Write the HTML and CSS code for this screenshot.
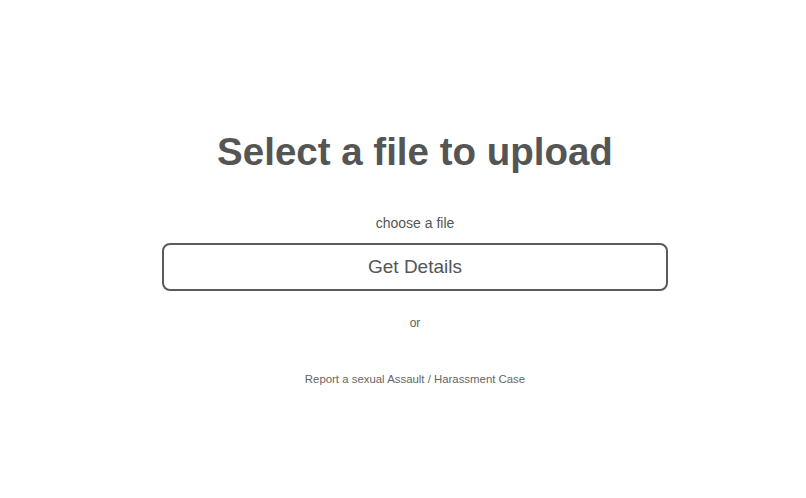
FILE: index.html
```html
<!DOCTYPE html>
<html lang="en">
<head>
<meta charset="utf-8">
<title>Select a file to upload</title>
<link rel="stylesheet" href="styles.css">
</head>
<body>
<main class="page">
  <section class="upload">
    <h1 class="title">Select a file to upload</h1>
    <label class="choose">choose a file</label>
    <button class="details-btn" type="button">Get Details</button>
    <p class="or">or</p>
    <a class="report" href="#">Report a sexual Assault / Harassment Case</a>
  </section>
</main>
</body>
</html>
```

FILE: styles.css
```css
html, body {
  margin: 0;
  padding: 0;
  background: #ffffff;
}
body {
  font-family: Arial, "Liberation Sans", sans-serif;
  color: #555555;
}
.page {
  padding-left: 24px;
  width: 806px;
  box-sizing: border-box;
}
.upload {
  display: flex;
  flex-direction: column;
  align-items: center;
  padding-top: 129px;
}
.title {
  margin: 0;
  font-size: 38.5px;
  font-weight: bold;
  line-height: 46px;
  color: #555555;
}
.choose {
  margin-top: 39px;
  font-size: 14px;
  line-height: 18px;
  color: #555555;
}
.details-btn {
  margin-top: 11px;
  width: 506px;
  height: 48px;
  box-sizing: border-box;
  border: 2px solid #5a5a5a;
  border-radius: 8px;
  background: #ffffff;
  font-family: Arial, "Liberation Sans", sans-serif;
  font-size: 19px;
  color: #555555;
  padding: 0;
}
.or {
  margin: 25px 0 0;
  font-size: 12px;
  line-height: 14px;
  color: #5e5e5e;
}
.report {
  margin-top: 42px;
  font-size: 11.4px;
  line-height: 14px;
  color: #666666;
  text-decoration: none;
}
```
